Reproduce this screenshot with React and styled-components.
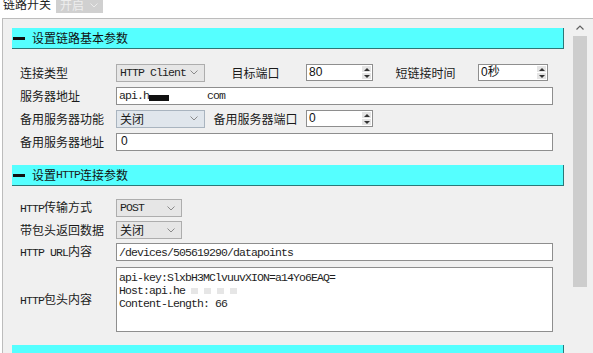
import React from 'react'
import styled, { createGlobalStyle } from 'styled-components'

const GlobalStyle = createGlobalStyle`
    html, body {
        margin: 0;
        padding: 0;
        background: #ffffff;
    }
    body {
        font-family: "Noto Sans CJK SC", "Liberation Sans", sans-serif;
        font-size: 12px;
        color: #111;
        overflow: hidden;
    }
`

const Chevron = ({ color = '#8a8a8a' }) => (
    <svg width="8" height="5" viewBox="0 0 8 5">
        <path d="M0.5 0.5 L4 4 L7.5 0.5" fill="none" stroke={color} strokeWidth="1" />
    </svg>
)

const App = () => {
    return (
        <>
            <GlobalStyle />
            <Page>
                <TopBar>
                    <TopLabel>链路开关</TopLabel>
                    <DisabledCombo>
                        开启
                        <Chevron color="#ebebeb" />
                    </DisabledCombo>
                </TopBar>

                <Panel>
                    <Content>
                        {/* first group: basic link settings */}
                        <SectionHeader>
                            <Dash />
                            设置链路基本参数
                        </SectionHeader>
                        <Form>
                            <Row>
                                <Label>连接类型</Label>
                                <Combo width={89}>
                                    <Lat>HTTP Client</Lat>
                                    <Chevron />
                                </Combo>
                                <MidLabel width={101}>目标端口</MidLabel>
                                <Spin width={67}>
                                    <SpinValue>80</SpinValue>
                                    <SpinArrows><Up /><Down /></SpinArrows>
                                </Spin>
                                <MidLabel width={105}>短链接时间</MidLabel>
                                <Spin width={70}>
                                    <SpinValue>0秒</SpinValue>
                                    <SpinArrows><Up /><Down /></SpinArrows>
                                </Spin>
                            </Row>
                            <Row>
                                <Label>服务器地址</Label>
                                <TextBox>
                                    <Lat>api.h</Lat>
                                    <Redact />
                                    <Blank width={38} />
                                    <Lat>com</Lat>
                                </TextBox>
                            </Row>
                            <Row>
                                <Label>备用服务器功能</Label>
                                <Combo width={89} focused>
                                    关闭
                                    <Chevron />
                                </Combo>
                                <MidLabel width={101}>备用服务器端口</MidLabel>
                                <Spin width={67}>
                                    <SpinValue>0</SpinValue>
                                    <SpinArrows><Up /><Down /></SpinArrows>
                                </Spin>
                            </Row>
                            <Row>
                                <Label>备用服务器地址</Label>
                                <TextBox>
                                    <SpinValue>0</SpinValue>
                                </TextBox>
                            </Row>
                        </Form>

                        {/* second group: http settings */}
                        <SectionHeader>
                            <Dash />
                            设置<Lat>HTTP</Lat>连接参数
                        </SectionHeader>
                        <Form tight>
                            <Row tight>
                                <Label><Lat>HTTP</Lat>传输方式</Label>
                                <Combo width={66}>
                                    <Lat>POST</Lat>
                                    <Chevron />
                                </Combo>
                            </Row>
                            <Row tight>
                                <Label>带包头返回数据</Label>
                                <Combo width={66}>
                                    关闭
                                    <Chevron />
                                </Combo>
                            </Row>
                            <Row tight>
                                <Label><Lat>HTTP URL</Lat>内容</Label>
                                <TextBox>
                                    <Lat>/devices/505619290/datapoints</Lat>
                                </TextBox>
                            </Row>
                            <AreaRow>
                                <Label><Lat>HTTP</Lat>包头内容</Label>
                                <TextArea>
                                    <Lat>api-key:SlxbH3MClvuuvXION=a14Yo6EAQ=</Lat>
                                    <Lat>
                                        Host:api.he
                                        <Smudge />
                                        <Smudge />
                                        <Smudge />
                                        <Smudge />
                                    </Lat>
                                    <Lat>Content-Length: 66</Lat>
                                </TextArea>
                            </AreaRow>
                        </Form>

                        <SectionHeader />
                    </Content>

                    <ScrollBar>
                        <ScrollButton>
                            <svg width="8" height="5" viewBox="0 0 8 5">
                                <path d="M0.5 4.5 L4 1 L7.5 4.5" fill="none" stroke="#606060" strokeWidth="1.2" />
                            </svg>
                        </ScrollButton>
                        <Thumb />
                    </ScrollBar>
                </Panel>
            </Page>
        </>
    )
}

export default App

const Page = styled.div`
    width: 593px;
    height: 353px;
    overflow: hidden;
    background: #ffffff;
`

const TopBar = styled.div`
    height: 18px;
    display: flex;
    align-items: flex-start;
    gap: 5px;
    padding-left: 3px;
    overflow: hidden;
`

const TopLabel = styled.span`
    line-height: 12px;
    margin-top: -2px;
    color: #222;
`

const DisabledCombo = styled.div`
    width: 47px;
    height: 16px;
    margin-top: -3px;
    box-sizing: border-box;
    padding: 0 5px 0 4px;
    display: flex;
    align-items: center;
    justify-content: space-between;
    background: #d0d0d0;
    color: #eeeeee;
    line-height: 12px;
`

const Panel = styled.div`
    margin-left: 2px;
    height: 335px;
    box-sizing: border-box;
    border-top: 1px solid #bcbcbc;
    border-left: 1px solid #bcbcbc;
    background: #f0f0f0;
    display: flex;
    overflow: hidden;
`

const Content = styled.div`
    flex: 1;
    padding: 9px 6px 0 9px;
`

const SectionHeader = styled.div`
    height: 21px;
    box-sizing: border-box;
    display: flex;
    align-items: center;
    padding-left: 1px;
    background: #55ffff;
    border-right: 1px solid #2c7878;
    border-bottom: 1px solid #2c7878;
    color: #111;
    line-height: 14px;
`

const Dash = styled.span`
    width: 12px;
    height: 3px;
    background: #111;
    margin-right: 7px;
`

const Lat = styled.span`
    font-family: "Liberation Mono", "Noto Sans CJK SC", monospace;
    font-size: 11.5px;
    letter-spacing: -0.9px;
    white-space: pre;
    color: #1e1e1e;
`

const Form = styled.div`
    padding-left: 8px;
    margin: ${props => props.tight ? '11px 0 13px' : '12px 0'};
`

const Row = styled.div`
    height: ${props => props.tight ? 22 : 23}px;
    display: flex;
    align-items: center;
`

const AreaRow = styled.div`
    display: flex;
    align-items: center;
    margin-top: 4px;
`

const Label = styled.div`
    width: 96px;
    flex-shrink: 0;
    line-height: 14px;
    color: #1a1a1a;
`

const MidLabel = styled.div`
    width: ${props => props.width}px;
    flex-shrink: 0;
    text-align: center;
    line-height: 14px;
    color: #1a1a1a;
`

const Combo = styled.div`
    width: ${props => props.width}px;
    height: 18px;
    box-sizing: border-box;
    flex-shrink: 0;
    display: flex;
    align-items: center;
    justify-content: space-between;
    padding: 0 6px 0 3px;
    background: ${props => props.focused ? '#e0e6ec' : '#e6e6e6'};
    border: 1px solid ${props => props.focused ? '#a9b4bf' : '#adadad'};
    line-height: 14px;
    color: #1a1a1a;
`

const Spin = styled.div`
    width: ${props => props.width}px;
    height: 17px;
    box-sizing: border-box;
    flex-shrink: 0;
    display: flex;
    justify-content: space-between;
    background: #ffffff;
    border: 1px solid #8e8e8e;
`

const SpinValue = styled.span`
    font-family: "Liberation Sans", "Noto Sans CJK SC", sans-serif;
    font-size: 12px;
    line-height: 15px;
    padding-left: 2px;
`

const SpinArrows = styled.div`
    width: 9px;
    margin: 1px;
    display: flex;
    flex-direction: column;
    gap: 1px;
`

const Up = styled.div`
    flex: 1;
    background: #e4e4e4;
    display: flex;
    align-items: center;
    justify-content: center;
    &::after {
        content: '';
        border-left: 3px solid transparent;
        border-right: 3px solid transparent;
        border-bottom: 3px solid #333;
    }
`

const Down = styled(Up)`
    &::after {
        border-bottom: none;
        border-top: 3px solid #333;
    }
`

const TextBox = styled.div`
    width: 437px;
    height: 18px;
    box-sizing: border-box;
    flex-shrink: 0;
    display: flex;
    align-items: center;
    padding-left: 2px;
    background: #ffffff;
    border: 1px solid #8e8e8e;
    color: #111;
`

const Redact = styled.span`
    width: 20px;
    height: 6px;
    margin-top: 4px;
    background: #111;
`

const Blank = styled.span`
    width: ${props => props.width}px;
`

const Smudge = styled.span`
    display: inline-block;
    width: 7px;
    height: 6px;
    margin-left: 6px;
    background: #e6e6e6;
`

const TextArea = styled.div`
    width: 437px;
    height: 65px;
    box-sizing: border-box;
    flex-shrink: 0;
    display: flex;
    flex-direction: column;
    padding: 3px 2px;
    background: #ffffff;
    border: 1px solid #8e8e8e;
    line-height: 13px;
    color: #111;
`

const ScrollBar = styled.div`
    width: 20px;
    margin-right: 3px;
    flex-shrink: 0;
    display: flex;
    flex-direction: column;
    background: #f0f0f0;
`

const ScrollButton = styled.div`
    height: 17px;
    display: flex;
    align-items: center;
    justify-content: center;
`

const Thumb = styled.div`
    height: 251px;
    margin-left: 3px;
    width: 14px;
    background: #cdcdcd;
`
